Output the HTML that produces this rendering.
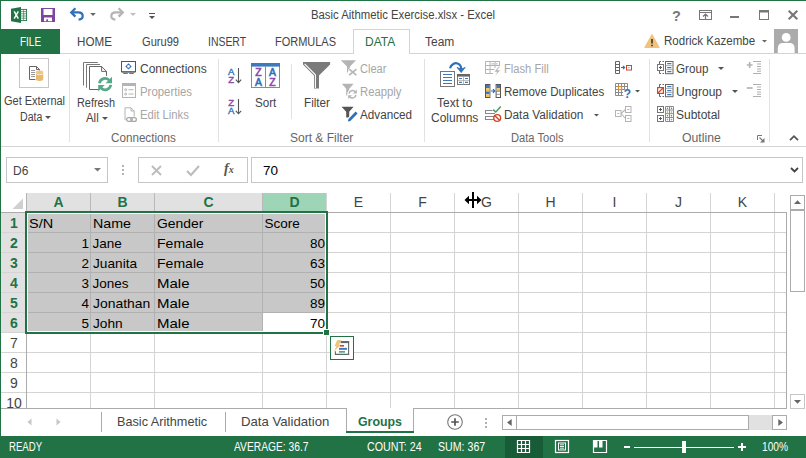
<!DOCTYPE html>
<html>
<head>
<meta charset="utf-8">
<title>Excel</title>
<style>
*{margin:0;padding:0;box-sizing:border-box}
html,body{width:806px;height:458px;overflow:hidden;background:#fff}
body{font-family:"Liberation Sans",sans-serif;font-size:12px;color:#444;position:relative}
#win{position:absolute;left:0;top:0;width:806px;height:458px;background:#fff;overflow:hidden}
.a{position:absolute}
.t{transform-origin:0 50%;position:absolute;white-space:nowrap;line-height:14px;height:14px;font-size:12px;color:#444}
.dis{color:#a6a6a6}
.st{font-size:13.3px;line-height:16px;height:16px}
.sb{color:#fff;line-height:14px}
.ct{text-align:center}
svg{position:absolute;overflow:visible}
/* grid */
.cell{position:absolute;white-space:nowrap;font-size:13.5px;line-height:16px;height:16px;color:#000}
.rh{position:absolute;left:1.5px;width:25px;text-align:center;font-size:14px;line-height:16px;height:16px;color:#444}
.ch{position:absolute;top:194px;width:63px;text-align:center;font-size:14px;line-height:16px;height:16px;color:#444}
.sel{color:#217346;font-weight:bold}
</style>
</head>
<body>
<div id="win">
<!-- window frame -->
<div class="a" style="left:0;top:0;width:806px;height:1px;background:#217346"></div>
<div class="a" style="left:0;top:0;width:1px;height:458px;background:#217346"></div>

<!-- TITLE BAR -->
<div id="title" class="t" style="left:311px;top:8px;width:184px;text-align:center;color:#444;transform:scaleX(0.945)">Basic Aithmetic Exercise.xlsx - Excel</div>

<!-- TITLE-ICONS -->
<svg style="left:11px;top:7px" width="16" height="16" viewBox="0 0 16 16"><rect x="9" y="2.4" width="6.6" height="11.2" fill="#fff" stroke="#217346" stroke-width="0.9"/><path d="M10 4.6h5.5M10 6.8h5.5M10 9h5.5M10 11.2h5.5" stroke="#217346" stroke-width="0.7"/><path d="M12.6 2.5v11" stroke="#217346" stroke-width="0.6"/><path d="M0 1.8L10 0v16L0 14.2Z" fill="#217346"/><path d="M3.2 4.4L7.3 11.6M7.3 4.4L3.2 11.6" stroke="#fff" stroke-width="1.5"/></svg>
<svg style="left:41px;top:8px" width="14" height="14" viewBox="0 0 14 14"><path d="M0 0h14v14H0Z" fill="#7e45a0"/><rect x="2.5" y="1" width="9" height="6" fill="#fff"/><rect x="3" y="9.5" width="8" height="3.7" fill="#fff"/><rect x="5.3" y="11.3" width="1.7" height="2" fill="#7e45a0"/></svg>
<svg style="left:69px;top:7px" width="16" height="14" viewBox="0 0 16 14"><path d="M3.5 5.4H9.3C12.3 5.4 13.7 7 13.7 9C13.7 11 12.2 12.4 9.6 12.6" fill="none" stroke="#2e6fb7" stroke-width="2.2"/><path d="M6.4 1.2L2.2 5.4L6.4 9.6" fill="none" stroke="#2e6fb7" stroke-width="2.2"/></svg>
<svg style="left:90px;top:13px" width="6" height="3" viewBox="0 0 6 3"><path d="M0.2 0H5.8L3 2.9Z" fill="#666"/></svg>
<svg style="left:109px;top:7px" width="16" height="14" viewBox="0 0 16 14"><path d="M12.5 5.4H6.7C3.7 5.4 2.3 7 2.3 9C2.3 11 3.8 12.4 6.4 12.6" fill="none" stroke="#b4b4b4" stroke-width="2.2"/><path d="M9.6 1.2L13.8 5.4L9.6 9.6" fill="none" stroke="#b4b4b4" stroke-width="2.2"/></svg>
<svg style="left:130px;top:13px" width="6" height="3" viewBox="0 0 6 3"><path d="M0 0H6L3 3Z" fill="#c0c0c0"/></svg>
<svg style="left:149px;top:13px" width="6" height="6" viewBox="0 0 6 6"><path d="M0 0H6V1H0Z M0 3H6L3 6Z" fill="#555"/></svg>
<div class="a" style="left:672px;top:9px;width:9px;font-size:14.5px;line-height:14px;font-weight:bold;color:#777;text-align:center">?</div>
<svg style="left:699px;top:10px" width="13" height="10" viewBox="0 0 13 10"><rect x="0.5" y="0.5" width="12" height="9" fill="none" stroke="#777"/><path d="M1 2.5h11" stroke="#777"/><path d="M6.5 4v5M4 6.5L6.5 4L9 6.5" fill="none" stroke="#777" stroke-width="1.2"/></svg>
<div class="a" style="left:730px;top:16px;width:9px;height:2px;background:#777"></div>
<svg style="left:759px;top:10px" width="10" height="10" viewBox="0 0 10 10"><path d="M0 0H10V10H0Z M1 2.5V9H9V2.5Z" fill="#777" fill-rule="evenodd"/></svg>
<svg style="left:788px;top:10px" width="10" height="10" viewBox="0 0 10 10"><path d="M0.7 0.7L9.3 9.3M9.3 0.7L0.7 9.3" stroke="#777" stroke-width="2.1"/></svg>
<svg style="left:644px;top:34px" width="16" height="14" viewBox="0 0 16 14"><path d="M8 0.8L15 13.3H1Z" fill="#efc37e" stroke="#efc37e" stroke-width="1.2" stroke-linejoin="round"/><path d="M8 5v4.5M8 10.8v1.5" stroke="#333" stroke-width="1.6"/></svg>
<svg style="left:762px;top:39.5px" width="5" height="3" viewBox="0 0 5 3"><path d="M0 0H5L2.5 2.6Z" fill="#666"/></svg>
<svg style="left:774px;top:29px" width="24" height="24" viewBox="0 0 24 24"><rect width="24" height="24" fill="#ababab"/><circle cx="12.2" cy="8.4" r="4.4" fill="#fff"/><path d="M3.8 24V19.3C3.8 15.8 5.8 14 9 14H15.4C18.6 14 20.6 15.8 20.6 19.3V24Z" fill="#fff"/></svg>

<!-- TAB ROW -->
<div class="a" style="left:1px;top:29px;width:59px;height:25px;background:#217346"></div>
<div class="a" style="left:60px;top:53px;width:746px;height:1px;background:#d4d4d4"></div>
<div class="a" style="left:353px;top:29px;width:57px;height:25px;background:#fff;border:1px solid #d4d4d4;border-bottom:none"></div>
<div class="t" style="left:20px;top:35px;color:#fff;transform:scaleX(.83)">FILE</div>
<div class="t" style="left:77px;top:35px;transform:scaleX(0.97)">HOME</div>
<div class="t" style="left:142px;top:35px;transform:scaleX(0.925)">Guru99</div>
<div class="t" style="left:208px;top:35px;transform:scaleX(0.87)">INSERT</div>
<div class="t" style="left:275px;top:35px;transform:scaleX(0.915)">FORMULAS</div>
<div class="t" style="left:365px;top:35px;color:#217346">DATA</div>
<div class="t" style="left:425px;top:35px">Team</div>
<div class="t" style="left:664px;top:34px;transform:scaleX(.962)">Rodrick Kazembe</div>

<!-- RIBBON -->
<div id="ribbon" class="a" style="left:1px;top:54px;width:804px;height:93px;background:#fff"></div>
<div class="a" style="left:1px;top:146px;width:805px;height:1px;background:#d4d4d4"></div>

<!-- RIBBON-TEXT -->
<div class="a" style="left:69px;top:59px;width:1px;height:83px;background:#e1e1e1"></div>
<div class="a" style="left:218px;top:59px;width:1px;height:83px;background:#e1e1e1"></div>
<div class="a" style="left:291px;top:64px;width:1px;height:55px;background:#e1e1e1"></div>
<div class="a" style="left:424px;top:59px;width:1px;height:83px;background:#e1e1e1"></div>
<div class="a" style="left:649px;top:59px;width:1px;height:83px;background:#e1e1e1"></div>
<div class="a" style="left:769px;top:59px;width:1px;height:83px;background:#e1e1e1"></div>
<div class="t" style="left:4px;top:94px;transform:scaleX(0.915)">Get External</div>
<div class="t" style="left:20px;top:110px;transform:scaleX(.88)">Data</div>
<div class="t" style="left:76.5px;top:96px;transform:scaleX(.905)">Refresh</div>
<div class="t" style="left:85.5px;top:111px;transform:scaleX(.95)">All</div>
<div class="t" style="left:140px;top:62px">Connections</div>
<div class="t dis" style="left:140px;top:85px;transform:scaleX(0.95)">Properties</div>
<div class="t dis" style="left:140px;top:108px;transform:scaleX(0.94)">Edit Links</div>
<div class="t" style="left:111px;top:131px;color:#666;transform:scaleX(.972)">Connections</div>
<div class="t" style="left:255px;top:96px;transform:scaleX(0.97)">Sort</div>
<div class="t" style="left:304px;top:96px;transform:scaleX(0.975)">Filter</div>
<div class="t dis" style="left:360px;top:62px;transform:scaleX(0.92)">Clear</div>
<div class="t dis" style="left:360px;top:85px;transform:scaleX(0.94)">Reapply</div>
<div class="t" style="left:360px;top:108px;transform:scaleX(0.975)">Advanced</div>
<div class="t" style="left:290px;top:131px;color:#666">Sort &amp; Filter</div>
<div class="t" style="left:437px;top:96px">Text to</div>
<div class="t" style="left:431px;top:111px">Columns</div>
<div class="t dis" style="left:504px;top:62px;transform:scaleX(.93)">Flash Fill</div>
<div class="t" style="left:504px;top:85px;transform:scaleX(0.963)">Remove Duplicates</div>
<div class="t" style="left:504px;top:108px;transform:scaleX(0.985)">Data Validation</div>
<div class="t" style="left:511px;top:131px;color:#666;transform:scaleX(0.93)">Data Tools</div>
<div class="t" style="left:676px;top:62px;transform:scaleX(0.97)">Group</div>
<div class="t" style="left:676px;top:85px">Ungroup</div>
<div class="t" style="left:676px;top:108px">Subtotal</div>
<div class="t" style="left:682px;top:131px;color:#666;transform:scaleX(1.02)">Outline</div>
<!-- grp1 -->
<div class="a" style="left:19px;top:58px;width:30px;height:30px;border:1px solid #c6c6c6;background:#fff"></div>
<svg style="left:29px;top:66px" width="15" height="16" viewBox="0 0 15 16"><path d="M0.5 0.5H7.5L10.5 3.5V13.5H0.5Z" fill="#fff" stroke="#666"/><path d="M7.5 0.5V3.5H10.5" fill="none" stroke="#666"/><path d="M2 4.5h4.2M2 6.5h4.2M2 8.5h4.2M2 10.5h4.2" stroke="#999"/><path d="M6.4 4.6H15V16H6.4Z" fill="#fff"/><path d="M7 5.9V13.5A3.6 1.4 0 0 0 14.2 13.5V5.9Z" fill="#e9b96e"/><ellipse cx="10.6" cy="5.9" rx="3.6" ry="1.4" fill="#efc88a"/><path d="M7 7.2A3.6 1.4 0 0 0 14.2 7.2" fill="none" stroke="#fff" stroke-width="0.8"/></svg>
<svg style="left:83px;top:62px" width="30" height="30" viewBox="0 0 30 30"><path d="M0.5 23.5V0.5H14.8" fill="none" stroke="#777"/><path d="M3.5 25.7V2.5H17" fill="none" stroke="#777"/><path d="M6.5 4.5H18.6L23.5 9.4V27.5H6.5Z" fill="#fff" stroke="#666"/><path d="M18.6 4.5V9.4H23.5" fill="none" stroke="#666"/><circle cx="22.1" cy="22.1" r="8.4" fill="#fff"/><path d="M16.4 21.3A5.8 5.8 0 0 1 26.6 18.5" fill="none" stroke="#57a88a" stroke-width="2.7"/><path d="M29 14.8V21.2H22.6Z" fill="#57a88a"/><path d="M27.8 22.9A5.8 5.8 0 0 1 17.6 25.7" fill="none" stroke="#57a88a" stroke-width="2.7"/><path d="M15.2 29.4V23H21.6Z" fill="#57a88a"/></svg>
<svg style="left:121px;top:61px" width="15" height="13" viewBox="0 0 15 13"><rect x="0.5" y="0.5" width="14" height="10.3" fill="#fff" stroke="#555"/><path d="M1 11h13" stroke="#555" stroke-width="1"/><path d="M2.2 12.4h4.6M8.2 12.4h4.6" stroke="#555" stroke-width="0.9"/><path d="M7.5 2.2L10.7 5.4L7.5 8.6L4.3 5.4Z" fill="#2e6fb7"/><circle cx="7.5" cy="5.4" r="1.3" fill="#fff"/></svg>
<svg style="left:122px;top:83px" width="14" height="15" viewBox="0 0 14 15"><rect x="0.5" y="0.5" width="13" height="14" fill="#fff" stroke="#b4b4b4"/><rect x="0" y="0" width="14" height="3" fill="#b4b4b4"/><circle cx="3.7" cy="6.7" r="1" fill="none" stroke="#b4b4b4"/><circle cx="3.7" cy="11" r="1" fill="none" stroke="#b4b4b4"/><path d="M6.5 6.7h5M6.5 11h5" stroke="#b4b4b4"/></svg>
<svg style="left:124px;top:107px" width="14" height="16" viewBox="0 0 14 16"><path d="M1 13.2V0.8H7L10.2 4V9.5" fill="none" stroke="#b4b4b4"/><path d="M7 0.8V4H10.2" fill="none" stroke="#b4b4b4"/><rect x="2.6" y="10.6" width="5.6" height="3.8" rx="1.9" fill="#fff" stroke="#a8a8a8" stroke-width="1.3"/><rect x="6.8" y="10.6" width="5.6" height="3.8" rx="1.9" fill="none" stroke="#a8a8a8" stroke-width="1.3"/></svg>
<svg style="left:45px;top:116px" width="6" height="3" viewBox="0 0 6 3"><path d="M0 0H6L3 3Z" fill="#555"/></svg>
<svg style="left:102px;top:117px" width="6" height="3" viewBox="0 0 6 3"><path d="M0 0H6L3 3Z" fill="#555"/></svg>
<!-- grp2 -->
<svg style="left:227px;top:67px" width="16" height="17" viewBox="0 0 16 17"><text x="4.1" y="8.3" font-family="Liberation Sans,sans-serif" font-size="9.6" font-weight="normal" stroke="#2e6fb7" stroke-width=".35" fill="#2e6fb7" text-anchor="middle">A</text><text x="4.1" y="15.9" font-family="Liberation Sans,sans-serif" font-size="9.6" font-weight="normal" stroke="#8a4aa8" stroke-width=".35" fill="#8a4aa8" text-anchor="middle">Z</text><path d="M11.5 1V15.6M8.8 12.6L11.5 15.6L14.2 12.6" fill="none" stroke="#555" stroke-width="1.1"/></svg>
<svg style="left:227px;top:98px" width="16" height="17" viewBox="0 0 16 17"><text x="4.1" y="7.9" font-family="Liberation Sans,sans-serif" font-size="9.6" font-weight="normal" stroke="#8a4aa8" stroke-width=".35" fill="#8a4aa8" text-anchor="middle">Z</text><text x="4.1" y="16" font-family="Liberation Sans,sans-serif" font-size="9.6" font-weight="normal" stroke="#2e6fb7" stroke-width=".35" fill="#2e6fb7" text-anchor="middle">A</text><path d="M11.5 1V15.8M8.8 12.8L11.5 15.8L14.2 12.8" fill="none" stroke="#555" stroke-width="1.1"/></svg>
<svg style="left:251px;top:63px" width="29" height="25" viewBox="0 0 29 25"><rect x="0.5" y="0.5" width="28" height="24" fill="#fff" stroke="#8a8a8a"/><rect x="0" y="0" width="29" height="3.6" fill="#3e78bd"/><path d="M14.5 3.6V24.5" stroke="#8a8a8a"/><text x="7.5" y="13" font-family="Liberation Sans,sans-serif" font-size="10.4" font-weight="normal" stroke="#8a4aa8" stroke-width=".6" fill="#8a4aa8" text-anchor="middle">Z</text><text x="7.5" y="22.8" font-family="Liberation Sans,sans-serif" font-size="10.4" font-weight="normal" stroke="#2e6fb7" stroke-width=".6" fill="#2e6fb7" text-anchor="middle">A</text><text x="21.5" y="13" font-family="Liberation Sans,sans-serif" font-size="10.4" font-weight="normal" stroke="#2e6fb7" stroke-width=".6" fill="#2e6fb7" text-anchor="middle">A</text><text x="21.5" y="22.8" font-family="Liberation Sans,sans-serif" font-size="10.4" font-weight="normal" stroke="#8a4aa8" stroke-width=".6" fill="#8a4aa8" text-anchor="middle">Z</text></svg>
<svg style="left:302px;top:62px" width="29" height="27" viewBox="0 0 29 27"><path d="M1 0H28.1V2.5L17 13.6V26.6H12V13.6L1 2.5Z" fill="#7a7a7a"/><path d="M2.6 1.9L13.4 12.8V26" fill="none" stroke="#fff" stroke-width="1.1"/></svg>
<svg style="left:340px;top:60px" width="18" height="16" viewBox="0 0 18 16"><path d="M0.8 0.3H16L10 6.5V9L7 13V6.5Z" fill="#b4b4b4"/><path d="M8.8 8.8L16.6 15.4M16.6 8.8L8.8 15.4" stroke="#fff" stroke-width="3"/><path d="M9.2 9.2L16.4 15.2M16.4 9.2L9.2 15.2" stroke="#b4b4b4" stroke-width="1.6"/></svg>
<svg style="left:341px;top:83px" width="18" height="17" viewBox="0 0 18 17"><path d="M0.8 0.8H12.6L8.2 5.8V12.5H5.2V5.8Z" fill="#b4b4b4"/><circle cx="11.5" cy="11.3" r="5.3" fill="#fff"/><path d="M8 10.6A3.6 3.6 0 0 1 14.3 8.9" fill="none" stroke="#b4b4b4" stroke-width="1.5"/><path d="M15.8 6.6V10.4H12Z" fill="#b4b4b4"/><path d="M15 12A3.6 3.6 0 0 1 8.7 13.7" fill="none" stroke="#b4b4b4" stroke-width="1.5"/><path d="M7.2 16V12.2H11Z" fill="#b4b4b4"/></svg>
<svg style="left:341px;top:106px" width="18" height="17" viewBox="0 0 18 17"><path d="M0.6 0.8H12.6L8.2 5.8V11.5H5.2V5.8Z" fill="#555"/><path d="M14.8 5.2L17 7.4L9.5 14.9L6.3 16L7.3 12.7Z" fill="#fff" stroke="#fff" stroke-width="1.4"/><path d="M14.6 5.6L16.6 7.6L9.3 14.9L6.8 15.6L7.5 13Z" fill="#2e6fb7"/></svg>
<!-- grp3 -->
<svg style="left:440px;top:62px" width="31" height="26" viewBox="0 0 31 26"><rect x="0.5" y="9.5" width="14" height="15" fill="#fff" stroke="#777"/><path d="M3 12.5h9M3 15.5h9M3 18.5h9M3 21.5h9" stroke="#3e78bd" stroke-width="1.1"/><rect x="17.5" y="12.5" width="12" height="10" fill="#fff" stroke="#777"/><rect x="17" y="12" width="13" height="2.6" fill="#666"/><path d="M23.5 15V22.5M18 18.4h11" stroke="#aaa" stroke-width="0.8"/><path d="M19 16.5h3M25 16.5h3M19 20.4h3M25 20.4h3" stroke="#3e78bd" stroke-width="1.2"/><path d="M10 6.2C11.2 2 15 0.6 17.6 1.5C20.2 2.4 21.2 4.6 21.2 7" fill="none" stroke="#2e6fb7" stroke-width="2.2"/><path d="M17 5.4L21.2 10.6L25.2 5.4L21.2 7.2Z" fill="#2e6fb7" stroke="#2e6fb7" stroke-width="0.8" stroke-linejoin="round"/></svg>
<svg style="left:485px;top:61px" width="16" height="15" viewBox="0 0 16 15"><path d="M0.5 0.5H14.5V5.5M0.5 0.5V12.5H8M0.5 4.5H14.5M0.5 8.5H9.5M5 0.5V12.5M10 0.5V7" fill="none" stroke="#b4b4b4" stroke-width="1"/><rect x="6.3" y="2" width="6.5" height="1.6" fill="#d0d0d0"/><path d="M13.5 5.5L9 11H11.8L10 15.5L15.5 9H12.6L15 5.5Z" fill="#b4b4b4" stroke="#fff" stroke-width="0.6"/></svg>
<svg style="left:485px;top:84px" width="16" height="14" viewBox="0 0 16 14"><rect x="0.5" y="0.5" width="4.4" height="13" fill="#fff" stroke="#555"/><rect x="1" y="1" width="3.4" height="3" fill="#3e78bd"/><rect x="1" y="4.2" width="3.4" height="3" fill="#f0c05a"/><rect x="1" y="7.4" width="3.4" height="2.8" fill="#3e78bd"/><rect x="1" y="10.4" width="3.4" height="2.6" fill="#f0c05a"/><rect x="11.1" y="0.5" width="4.4" height="13" fill="#fff" stroke="#555"/><rect x="11.6" y="1" width="3.4" height="3" fill="#3e78bd"/><rect x="11.6" y="4.2" width="3.4" height="3" fill="#f0c05a"/><path d="M11.1 7.3h4.4M11.1 10.3h4.4" stroke="#777" stroke-width="0.8"/><path d="M6 7h3.6M8 5.2L9.8 7L8 8.8" fill="none" stroke="#2e6fb7" stroke-width="1.2"/></svg>
<svg style="left:485px;top:106px" width="17" height="16" viewBox="0 0 17 16"><rect x="0.5" y="4.5" width="9" height="3" fill="#fff" stroke="#888"/><rect x="0.5" y="10.5" width="9" height="3" fill="#fff" stroke="#888"/><path d="M8.2 3.6L10.8 6L15.8 0.6" fill="none" stroke="#fff" stroke-width="3"/><path d="M8.2 3.6L10.8 6L15.8 0.6" fill="none" stroke="#4a9a6a" stroke-width="1.5"/><circle cx="12.2" cy="12" r="3.4" fill="#fff" stroke="#d04727" stroke-width="1.4"/><path d="M9.9 9.7L14.5 14.3" stroke="#d04727" stroke-width="1.4"/></svg>
<svg style="left:594px;top:114px" width="5" height="3" viewBox="0 0 5 3"><path d="M0 0H5L2.5 2.5Z" fill="#555"/></svg>
<svg style="left:615px;top:61px" width="17" height="13" viewBox="0 0 17 13"><path d="M0.5 0.5H4.5V12.5H0.5ZM0.5 3.5H4.5M0.5 6.5H4.5M0.5 9.5H4.5" fill="#fff" stroke="#666"/><path d="M6 6.5h3.4M8 4.8L9.7 6.5L8 8.2" fill="none" stroke="#2e6fb7" stroke-width="1.1"/><rect x="11.5" y="4.5" width="5" height="4.5" fill="#fff" stroke="#d04727" stroke-width="1"/><rect x="13.5" y="6.2" width="1" height="1" fill="#777"/></svg>
<svg style="left:615px;top:83px" width="17" height="15" viewBox="0 0 17 15"><path d="M0.5 0.5H12.5V12.5H0.5ZM0.5 3.5H12.5M0.5 6.5H12.5M0.5 9.5H12.5M3.5 0.5V12.5M6.5 0.5V12.5M9.5 0.5V12.5" fill="#fff" stroke="#8a8a8a"/><rect x="3.5" y="3.5" width="3.2" height="3.2" fill="#fff" stroke="#e08a2c" stroke-width="1.1"/><circle cx="12.4" cy="10.5" r="4.6" fill="#fff"/><text x="12.5" y="14.8" font-family="Liberation Sans,sans-serif" font-size="12" font-weight="bold" fill="#2e6fb7" text-anchor="middle">?</text></svg>
<svg style="left:635px;top:90px" width="5" height="3" viewBox="0 0 5 3"><path d="M0 0H5L2.5 2.5Z" fill="#555"/></svg>
<svg style="left:615px;top:106px" width="17" height="16" viewBox="0 0 17 16"><path d="M6 7.5L10.5 3.5M6 7.5L10.5 12.5" stroke="#b4b4b4" stroke-width="1.1"/><rect x="0.5" y="4.5" width="5.5" height="6" fill="#fff" stroke="#b4b4b4"/><rect x="10.5" y="0.5" width="5.5" height="6" fill="#fff" stroke="#b4b4b4"/><rect x="10.5" y="9.5" width="5.5" height="6" fill="#fff" stroke="#b4b4b4"/><path d="M2.3 7.5h2M12.3 3.5h2M12.3 12.5h2" stroke="#b4b4b4"/></svg>
<!-- grp4 -->
<svg style="left:657px;top:61px" width="17" height="13" viewBox="0 0 17 13"><path d="M2.5 3V0.5H4M5.5 0.5H7M2.5 10V12.5H4M5.5 12.5H7" fill="none" stroke="#666"/><rect x="0.5" y="3.5" width="6" height="6" fill="#fff" stroke="#777"/><path d="M2 6.5h3M3.5 5v3" stroke="#555"/><rect x="8.5" y="0.5" width="7.5" height="12.2" fill="#fff" stroke="#666"/><path d="M8.5 4.6h7.5M8.5 8.6h7.5" stroke="#999" stroke-width="0.8"/><path d="M10.2 2.6h4.2M10.2 6.6h4.2M10.2 10.7h4.2" stroke="#3e78bd" stroke-width="1.2"/></svg>
<svg style="left:657px;top:84px" width="17" height="13" viewBox="0 0 17 13"><path d="M2.5 3V0.5H4M5.5 0.5H7M2.5 10V12.5H4M5.5 12.5H7" fill="none" stroke="#666"/><rect x="0.6" y="3.6" width="5.8" height="5.8" fill="#fff" stroke="#d04727" stroke-width="1.2"/><path d="M1 9L6 4" stroke="#d04727" stroke-width="1.2"/><rect x="8.5" y="0.5" width="7.5" height="12.2" fill="#fff" stroke="#666"/><path d="M8.5 4.6h7.5M8.5 8.6h7.5" stroke="#999" stroke-width="0.8"/><path d="M10.2 2.6h4.2M10.2 6.6h4.2M10.2 10.7h4.2" stroke="#3e78bd" stroke-width="1.2"/></svg>
<svg style="left:657px;top:106px" width="17" height="16" viewBox="0 0 17 16"><rect x="0.5" y="0.5" width="6" height="6" fill="#fff" stroke="#777"/><path d="M2 3.5h3M3.5 2v3" stroke="#555"/><rect x="0.5" y="9.5" width="6" height="6" fill="#fff" stroke="#777"/><path d="M2 12.5h3M3.5 11v3" stroke="#555"/><path d="M8.5 0.5H16.5V15.5H8.5ZM8.5 4H16.5M8.5 7.7H16.5M8.5 11.5H16.5M12.5 0.5V15.5" fill="#fff" stroke="#8a8a8a"/><path d="M10.5 6h0.01M14.5 6h0.01M10.5 13.6h0.01M14.5 13.6h0.01" stroke="#e08a2c" stroke-width="1.6" stroke-linecap="round"/><path d="M10.5 2.3h0.01M14.5 2.3h0.01M10.5 9.8h0.01M14.5 9.8h0.01" stroke="#3e78bd" stroke-width="1.4" stroke-linecap="round"/></svg>
<svg style="left:718px;top:67px" width="6" height="3" viewBox="0 0 6 3"><path d="M0 0H6L3 3Z" fill="#555"/></svg>
<svg style="left:732px;top:90px" width="6" height="3" viewBox="0 0 6 3"><path d="M0 0H6L3 3Z" fill="#555"/></svg>
<svg style="left:746px;top:61px" width="16" height="13" viewBox="0 0 16 13"><path d="M0.8 4h5.8M3.7 1.1v5.8" stroke="#b4b4b4" stroke-width="1.7"/><path d="M7 0.5h8M11 3h4M11 5.5h4M11 8h4M11 10.2h4M7 12.5h8" stroke="#b0b0b0" stroke-width="1.1"/></svg>
<svg style="left:746px;top:84px" width="16" height="13" viewBox="0 0 16 13"><path d="M0.8 4h5.8" stroke="#b4b4b4" stroke-width="1.7"/><path d="M7 0.5h8M11 3h4M11 5.5h4M11 8h4M11 10.2h4M7 12.5h8" stroke="#b0b0b0" stroke-width="1.1"/></svg>
<svg style="left:757px;top:135px" width="8" height="8" viewBox="0 0 8 8"><path d="M0.5 5V0.5H5" fill="none" stroke="#777"/><path d="M2.5 2.5L6.5 6.5" stroke="#777" stroke-width="1.1"/><path d="M7.5 3V7.5H3Z" fill="#777"/></svg>
<svg style="left:789px;top:135px" width="10" height="6" viewBox="0 0 10 6"><path d="M1 5.2L5 1.2L9 5.2" fill="none" stroke="#555" stroke-width="1.8"/></svg>
<!-- RIBBON-ICONS -->

<!-- FORMULA BAR -->
<div class="a" style="left:6px;top:157px;width:102px;height:26px;border:1px solid #c6c6c6"></div>
<div class="a" style="left:138px;top:157px;width:110px;height:26px;border:1px solid #c6c6c6"></div>
<div class="a" style="left:251px;top:157px;width:552px;height:26px;border:1px solid #c6c6c6"></div>
<div class="t" style="left:13px;top:164px">D6</div>
<div class="t" style="left:263px;top:163px;font-size:13.5px;line-height:16px;height:16px;color:#000">70</div>

<!-- GRID -->
<!-- FB-ICONS -->
<svg style="left:94px;top:168px" width="7" height="4" viewBox="0 0 7 4"><path d="M0 0H7L3.5 3.5Z" fill="#777"/></svg>
<div class="a" style="left:122px;top:165px;width:2px;height:2px;background:#b4b4b4"></div>
<div class="a" style="left:122px;top:169px;width:2px;height:2px;background:#b4b4b4"></div>
<div class="a" style="left:122px;top:173px;width:2px;height:2px;background:#b4b4b4"></div>
<svg style="left:151px;top:165px" width="11" height="11" viewBox="0 0 11 11"><path d="M1 1L10 10M10 1L1 10" stroke="#bcbcbc" stroke-width="1.9"/></svg>
<svg style="left:186px;top:165px" width="14" height="11" viewBox="0 0 14 11"><path d="M1 6L5 10L13 1" fill="none" stroke="#bcbcbc" stroke-width="2.1"/></svg>
<div class="a" style="left:224px;top:161px;font-family:'Liberation Serif',serif;font-style:italic;font-weight:bold;font-size:14px;line-height:16px;color:#555"><i>f</i><span style="font-size:10px;font-style:italic">x</span></div>
<svg style="left:790px;top:167px" width="9" height="6" viewBox="0 0 9 6"><path d="M1 1L4.5 4.5L8 1" fill="none" stroke="#444" stroke-width="1.8"/></svg>

<!-- GRID-START -->
<div class="a" style="left:27px;top:193px;width:63px;height:19px;background:#e1e1e1"></div>
<div class="a" style="left:91px;top:193px;width:63px;height:19px;background:#e1e1e1"></div>
<div class="a" style="left:155px;top:193px;width:107px;height:19px;background:#e1e1e1"></div>
<div class="a" style="left:263px;top:193px;width:63px;height:19px;background:#9fd5b7"></div>
<div class="a" style="left:1px;top:213px;width:25px;height:119px;background:#e1e1e1"></div>
<div class="a" style="left:27px;top:213px;width:299px;height:119px;background:#c8c8c8"></div>
<div class="a" style="left:263px;top:313px;width:63px;height:19px;background:#fff"></div>
<div class="a" style="left:1px;top:232px;width:785px;height:1px;background:#d4d4d4"></div>
<div class="a" style="left:1px;top:252px;width:785px;height:1px;background:#d4d4d4"></div>
<div class="a" style="left:1px;top:272px;width:785px;height:1px;background:#d4d4d4"></div>
<div class="a" style="left:1px;top:292px;width:785px;height:1px;background:#d4d4d4"></div>
<div class="a" style="left:1px;top:312px;width:785px;height:1px;background:#d4d4d4"></div>
<div class="a" style="left:1px;top:332px;width:785px;height:1px;background:#d4d4d4"></div>
<div class="a" style="left:1px;top:352px;width:785px;height:1px;background:#d4d4d4"></div>
<div class="a" style="left:1px;top:372px;width:785px;height:1px;background:#d4d4d4"></div>
<div class="a" style="left:1px;top:392px;width:785px;height:1px;background:#d4d4d4"></div>
<div class="a" style="left:90px;top:213px;width:1px;height:195px;background:#d4d4d4"></div>
<div class="a" style="left:154px;top:213px;width:1px;height:195px;background:#d4d4d4"></div>
<div class="a" style="left:262px;top:213px;width:1px;height:195px;background:#d4d4d4"></div>
<div class="a" style="left:326px;top:213px;width:1px;height:195px;background:#d4d4d4"></div>
<div class="a" style="left:390px;top:213px;width:1px;height:195px;background:#d4d4d4"></div>
<div class="a" style="left:454px;top:213px;width:1px;height:195px;background:#d4d4d4"></div>
<div class="a" style="left:518px;top:213px;width:1px;height:195px;background:#d4d4d4"></div>
<div class="a" style="left:582px;top:213px;width:1px;height:195px;background:#d4d4d4"></div>
<div class="a" style="left:646px;top:213px;width:1px;height:195px;background:#d4d4d4"></div>
<div class="a" style="left:710px;top:213px;width:1px;height:195px;background:#d4d4d4"></div>
<div class="a" style="left:774px;top:213px;width:1px;height:195px;background:#d4d4d4"></div>
<div class="a" style="left:90px;top:193px;width:1px;height:19px;background:#b9b9b9"></div>
<div class="a" style="left:154px;top:193px;width:1px;height:19px;background:#b9b9b9"></div>
<div class="a" style="left:262px;top:193px;width:1px;height:19px;background:#b9b9b9"></div>
<div class="a" style="left:326px;top:193px;width:1px;height:19px;background:#d4d4d4"></div>
<div class="a" style="left:390px;top:193px;width:1px;height:19px;background:#d4d4d4"></div>
<div class="a" style="left:454px;top:193px;width:1px;height:19px;background:#d4d4d4"></div>
<div class="a" style="left:518px;top:193px;width:1px;height:19px;background:#d4d4d4"></div>
<div class="a" style="left:582px;top:193px;width:1px;height:19px;background:#d4d4d4"></div>
<div class="a" style="left:646px;top:193px;width:1px;height:19px;background:#d4d4d4"></div>
<div class="a" style="left:710px;top:193px;width:1px;height:19px;background:#d4d4d4"></div>
<div class="a" style="left:774px;top:193px;width:1px;height:19px;background:#d4d4d4"></div>
<div class="a" style="left:1px;top:212px;width:786px;height:1px;background:#ababab"></div>
<div class="a" style="left:26px;top:193px;width:1px;height:19px;background:#b4b4b4"></div>
<div class="a" style="left:26px;top:212px;width:1px;height:196px;background:#ababab"></div>
<div class="a" style="left:27px;top:232px;width:299px;height:1px;background:#b1b1b1"></div>
<div class="a" style="left:27px;top:252px;width:299px;height:1px;background:#b1b1b1"></div>
<div class="a" style="left:27px;top:272px;width:299px;height:1px;background:#b1b1b1"></div>
<div class="a" style="left:27px;top:292px;width:299px;height:1px;background:#b1b1b1"></div>
<div class="a" style="left:27px;top:312px;width:299px;height:1px;background:#b1b1b1"></div>
<div class="a" style="left:90px;top:213px;width:1px;height:119px;background:#b1b1b1"></div>
<div class="a" style="left:154px;top:213px;width:1px;height:119px;background:#b1b1b1"></div>
<div class="a" style="left:262px;top:213px;width:1px;height:119px;background:#b1b1b1"></div>
<div class="a" style="left:263px;top:312px;width:63px;height:1px;background:#b1b1b1"></div>
<div class="a" style="left:786px;top:212px;width:1px;height:197px;background:#ababab"></div>
<div class="a" style="left:25px;top:211px;width:303px;height:123px;border:2px solid #217346;box-shadow:inset 0 0 0 1px #fff"></div>
<div class="a" style="left:323px;top:329px;width:7px;height:7px;background:#fff"></div>
<div class="a" style="left:324px;top:330px;width:5px;height:5px;background:#217346"></div>
<svg style="left:12px;top:198px" width="12" height="12" viewBox="0 0 12 12"><path d="M11 0.5V11H0.5Z" fill="#d0d0d0"/></svg>
<div class="ch sel" style="left:27px;width:63px">A</div>
<div class="ch sel" style="left:91px;width:63px">B</div>
<div class="ch sel" style="left:155px;width:107px">C</div>
<div class="ch sel" style="left:263px;width:63px">D</div>
<div class="ch" style="left:327px;width:63px">E</div>
<div class="ch" style="left:391px;width:63px">F</div>
<div class="ch" style="left:455px;width:63px">G</div>
<div class="ch" style="left:519px;width:63px">H</div>
<div class="ch" style="left:583px;width:63px">I</div>
<div class="ch" style="left:647px;width:63px">J</div>
<div class="ch" style="left:711px;width:63px">K</div>
<div class="rh sel" style="top:215px">1</div>
<div class="rh sel" style="top:235px">2</div>
<div class="rh sel" style="top:255px">3</div>
<div class="rh sel" style="top:275px">4</div>
<div class="rh sel" style="top:295px">5</div>
<div class="rh sel" style="top:315px">6</div>
<div class="rh" style="top:335px">7</div>
<div class="rh" style="top:355px">8</div>
<div class="rh" style="top:375px">9</div>
<div class="rh" style="top:395px">10</div>
<div class="cell" style="left:28.5px;top:216px;transform-origin:0 50%;transform:scaleX(1.07)">S/N</div>
<div class="cell" style="left:92.5px;top:216px;transform-origin:0 50%;transform:scaleX(1.055)">Name</div>
<div class="cell" style="left:156.5px;top:216px;transform-origin:0 50%;transform:scaleX(1.03)">Gender</div>
<div class="cell" style="left:264.5px;top:216px;transform-origin:0 50%;transform:scaleX(1)">Score</div>
<div class="cell" style="left:27px;top:236px;width:62px;text-align:right">1</div>
<div class="cell" style="left:92.5px;top:236px;transform-origin:0 50%;transform:scaleX(1)">Jane</div>
<div class="cell" style="left:156.5px;top:236px;transform-origin:0 50%;transform:scaleX(1.04)">Female</div>
<div class="cell" style="left:263px;top:236px;width:62px;text-align:right">80</div>
<div class="cell" style="left:27px;top:256px;width:62px;text-align:right">2</div>
<div class="cell" style="left:92.5px;top:256px;transform-origin:0 50%;transform:scaleX(1.012)">Juanita</div>
<div class="cell" style="left:156.5px;top:256px;transform-origin:0 50%;transform:scaleX(1.04)">Female</div>
<div class="cell" style="left:263px;top:256px;width:62px;text-align:right">63</div>
<div class="cell" style="left:27px;top:276px;width:62px;text-align:right">3</div>
<div class="cell" style="left:92.5px;top:276px;transform-origin:0 50%;transform:scaleX(1)">Jones</div>
<div class="cell" style="left:156.5px;top:276px;transform-origin:0 50%;transform:scaleX(1.11)">Male</div>
<div class="cell" style="left:263px;top:276px;width:62px;text-align:right">50</div>
<div class="cell" style="left:27px;top:296px;width:62px;text-align:right">4</div>
<div class="cell" style="left:92.5px;top:296px;transform-origin:0 50%;transform:scaleX(1.03)">Jonathan</div>
<div class="cell" style="left:156.5px;top:296px;transform-origin:0 50%;transform:scaleX(1.11)">Male</div>
<div class="cell" style="left:263px;top:296px;width:62px;text-align:right">89</div>
<div class="cell" style="left:27px;top:316px;width:62px;text-align:right">5</div>
<div class="cell" style="left:92.5px;top:316px;transform-origin:0 50%;transform:scaleX(1.015)">John</div>
<div class="cell" style="left:156.5px;top:316px;transform-origin:0 50%;transform:scaleX(1.11)">Male</div>
<div class="cell" style="left:263px;top:316px;width:62px;text-align:right">70</div>
<div class="a" style="left:1px;top:409px;width:804px;height:27px;background:#fff"></div>
<!-- GRID-END -->

<!-- CURSOR + QA -->
<svg style="left:464px;top:192px" width="18" height="16" viewBox="0 0 18 16"><path d="M8 0H10V16H8Z" fill="#000"/><path d="M2 7H16V9H2Z" fill="#000"/><path d="M0.5 8L5 3.8V12.2Z M17.5 8L13 3.8V12.2Z" fill="#000"/></svg>
<div class="a" style="left:330px;top:336px;width:24px;height:24px;background:#fff;border:1px solid #217346"></div>
<svg style="left:334px;top:340px" width="16" height="16" viewBox="0 0 16 16"><path d="M7 1.8H14.6V14.4H1.4V11.2" fill="none" stroke="#666" stroke-width="1.1"/><rect x="6.5" y="1.2" width="8.6" height="1.9" fill="#666"/><path d="M3.2 0H7.6L4.9 4.8H7.1L-0.2 11.6L2.4 6.3H0.5Z" fill="#ecc57f"/><rect x="6" y="5" width="4" height="1.6" fill="#d04727"/><rect x="5" y="7.9" width="8" height="1.9" fill="#3e78bd"/><rect x="5" y="11" width="6" height="1.7" fill="#4fa887"/></svg>
<!-- SHEET TABS -->
<div class="a" style="left:1px;top:408px;width:346px;height:1px;background:#ababab"></div>
<div class="a" style="left:413px;top:408px;width:374px;height:1px;background:#ababab"></div>
<div class="a" style="left:346px;top:408px;width:1px;height:25px;background:#ababab"></div>
<div class="a" style="left:413px;top:408px;width:1px;height:25px;background:#ababab"></div>
<div class="a" style="left:346px;top:431px;width:68px;height:2px;background:#217346"></div>
<div class="a" style="left:101px;top:412px;width:1px;height:20px;background:#ababab"></div>
<div class="a" style="left:225px;top:412px;width:1px;height:20px;background:#ababab"></div>
<svg style="left:27px;top:418px" width="5" height="8" viewBox="0 0 5 8"><path d="M4.5 0.5V7.5L0.5 4Z" fill="#c6c6c6"/></svg>
<svg style="left:56px;top:418px" width="5" height="8" viewBox="0 0 5 8"><path d="M0.5 0.5V7.5L4.5 4Z" fill="#c6c6c6"/></svg>
<div class="t st" style="left:117px;top:414px;transform:scaleX(.953)">Basic Arithmetic</div>
<div class="t st" style="left:241px;top:414px;transform:scaleX(.99)">Data Validation</div>
<div class="t st" style="left:358px;top:414px;color:#217346;font-weight:bold;transform:scaleX(.93)">Groups</div>
<svg style="left:447px;top:414px" width="16" height="16" viewBox="0 0 16 16"><circle cx="8" cy="8" r="7.3" fill="#fff" stroke="#777" stroke-width="1.1"/><path d="M4.2 8h7.6M8 4.2v7.6" stroke="#555" stroke-width="1.7"/></svg>
<div class="a" style="left:485px;top:417.5px;width:2px;height:2px;background:#b0b0b0"></div>
<div class="a" style="left:485px;top:421.5px;width:2px;height:2px;background:#b0b0b0"></div>
<div class="a" style="left:485px;top:425.5px;width:2px;height:2px;background:#b0b0b0"></div>
<!-- hscroll -->
<div class="a" style="left:502px;top:415px;width:285px;height:15px;background:#e1e1e1"></div>
<div class="a" style="left:502px;top:415px;width:15px;height:15px;background:#fff;border:1px solid #ababab"></div>
<div class="a" style="left:516px;top:415px;width:233px;height:15px;background:#fff;border:1px solid #ababab"></div>
<div class="a" style="left:772px;top:415px;width:15px;height:15px;background:#fff;border:1px solid #ababab"></div>
<svg style="left:507px;top:419px" width="5" height="7" viewBox="0 0 5 7"><path d="M4.7 0V7L0 3.5Z" fill="#666"/></svg>
<svg style="left:778px;top:419px" width="5" height="7" viewBox="0 0 5 7"><path d="M0.3 0V7L5 3.5Z" fill="#666"/></svg>
<!-- vscroll -->
<div class="a" style="left:790px;top:195px;width:15px;height:15px;background:#fff;border:1px solid #ababab"></div>
<div class="a" style="left:790px;top:210px;width:15px;height:82px;background:#fff;border:1px solid #ababab"></div>
<div class="a" style="left:790px;top:394px;width:15px;height:15px;background:#fff;border:1px solid #c6c6c6"></div>
<svg style="left:794px;top:200px" width="7" height="4" viewBox="0 0 7 4"><path d="M0 4H7L3.5 0.2Z" fill="#666"/></svg>
<svg style="left:794px;top:400px" width="7" height="4" viewBox="0 0 7 4"><path d="M0 0H7L3.5 3.8Z" fill="#666"/></svg>

<!-- STATUS BAR -->
<div id="status" class="a" style="left:0;top:436px;width:806px;height:22px;background:#217346"></div>
<div class="a" style="left:505px;top:436px;width:38px;height:22px;background:#185c37"></div>
<div class="t sb" style="left:8.5px;top:440px;transform:scaleX(.80)">READY</div>
<div class="t sb" style="left:234px;top:440px;transform:scaleX(.855)">AVERAGE: 36.7</div>
<div class="t sb" style="left:367px;top:440px;transform:scaleX(.89)">COUNT: 24</div>
<div class="t sb" style="left:438px;top:440px;transform:scaleX(.885)">SUM: 367</div>
<div class="t sb" style="left:762px;top:440px;transform:scaleX(.85)">100%</div>
<svg style="left:517px;top:440px" width="13" height="13" viewBox="0 0 13 13"><path d="M0.5 0.5H12.5V12.5H0.5ZM0.5 4.5H12.5M0.5 8.5H12.5M4.5 0.5V12.5M8.5 0.5V12.5" fill="none" stroke="#fff" stroke-width="1.2"/></svg>
<svg style="left:555px;top:440px" width="14" height="13" viewBox="0 0 14 13"><rect x="0.5" y="0.5" width="13" height="12" fill="none" stroke="#fff" stroke-width="1.2"/><rect x="3.5" y="3" width="7" height="7" fill="none" stroke="#fff"/><path d="M5 4.8h4M5 6.5h4M5 8.2h4" stroke="#fff" stroke-width=".9"/></svg>
<svg style="left:593px;top:440px" width="14" height="13" viewBox="0 0 14 13"><path d="M0.5 0.5H13.5V12.5H0.5Z" fill="none" stroke="#fff" stroke-width="1.2"/><path d="M1 1H4.5V7.5H1ZM6 1H9.5V7.5H6Z" fill="#fff"/></svg>
<div class="a" style="left:624px;top:446px;width:6px;height:2px;background:#fff"></div>
<div class="a" style="left:634px;top:447px;width:100px;height:1px;background:#fff"></div>
<div class="a" style="left:682px;top:441px;width:4px;height:12px;background:#fff"></div>
<div class="a" style="left:738px;top:446px;width:8px;height:2px;background:#fff"></div>
<div class="a" style="left:741px;top:443px;width:2px;height:8px;background:#fff"></div>
</div>
</body>
</html>
